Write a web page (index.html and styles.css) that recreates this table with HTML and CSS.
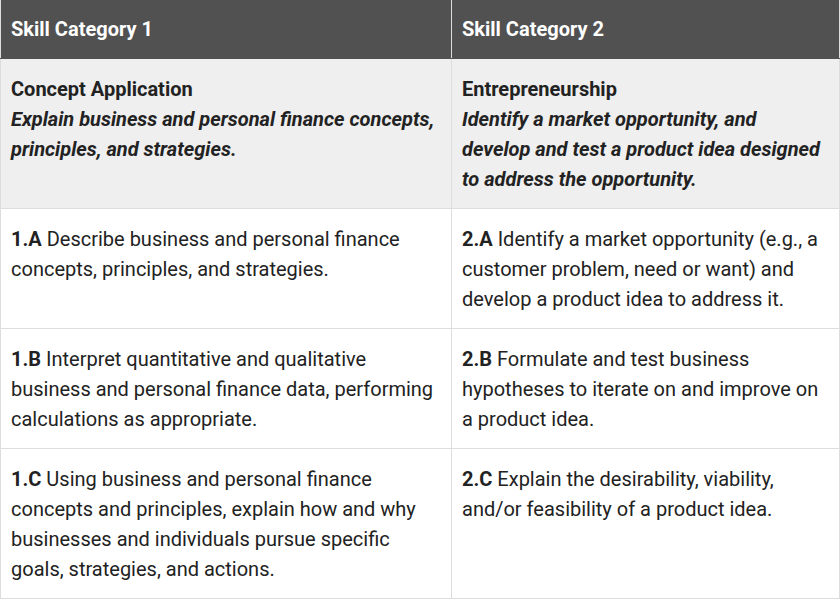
FILE: index.html
```html
<!DOCTYPE html>
<html>
<head>
<meta charset="utf-8">
<link rel="stylesheet" href="styles.css">
</head>
<body>
<table class="skills">
  <colgroup><col class="c1"><col class="c2"></colgroup>
  <thead>
    <tr><th>Skill Category 1</th><th>Skill Category 2</th></tr>
  </thead>
  <tbody>
    <tr class="cat">
      <td><strong>Concept Application</strong><br><em>Explain business and personal finance concepts, principles, and strategies.</em></td>
      <td><strong>Entrepreneurship</strong><br><em>Identify a market opportunity, and develop and test a product idea designed to address the opportunity.</em></td>
    </tr>
    <tr>
      <td><strong>1.A</strong> Describe business and personal finance concepts, principles, and strategies.</td>
      <td><strong>2.A</strong> Identify a market opportunity (e.g., a customer problem, need or want) and develop a product idea to address it.</td>
    </tr>
    <tr>
      <td><strong>1.B</strong> Interpret quantitative and qualitative business and personal finance data, performing calculations as appropriate.</td>
      <td><strong>2.B</strong> Formulate and test business hypotheses to iterate on and improve on a product idea.</td>
    </tr>
    <tr>
      <td><strong>1.C</strong> Using business and personal finance concepts and principles, explain how and why businesses and individuals pursue specific goals, strategies, and actions.</td>
      <td><strong>2.C</strong> Explain the desirability, viability, and/or feasibility of a product idea.</td>
    </tr>
  </tbody>
</table>
</body>
</html>
```
FILE: styles.css
```css
html, body {
  margin: 0;
  padding: 0;
  background: #ffffff;
}
.skills {
  border-collapse: collapse;
  table-layout: fixed;
  width: 839px;
  font-family: Roboto, "Liberation Sans", sans-serif;
  font-size: 20px;
  line-height: 30px;
  color: #222222;
}
.c1 { width: 451px; }
.c2 { width: 388px; }
.skills th {
  background: #515151;
  color: #ffffff;
  text-align: left;
  font-weight: 700;
  padding: 14px 10px 14px 10px;
  border-left: 1px solid #dddddd;
  border-right: 1px solid #dddddd;
  border-bottom: 1px solid #515151;
}
.skills td {
  vertical-align: top;
  padding: 15px 10px 14px 10px;
  border: 1px solid #dddddd;
  border-top: none;
}
.skills .cat td {
  background: #efefef;
}
.skills strong { font-weight: 700; }
.skills em { font-style: italic; font-weight: 700; }
```
